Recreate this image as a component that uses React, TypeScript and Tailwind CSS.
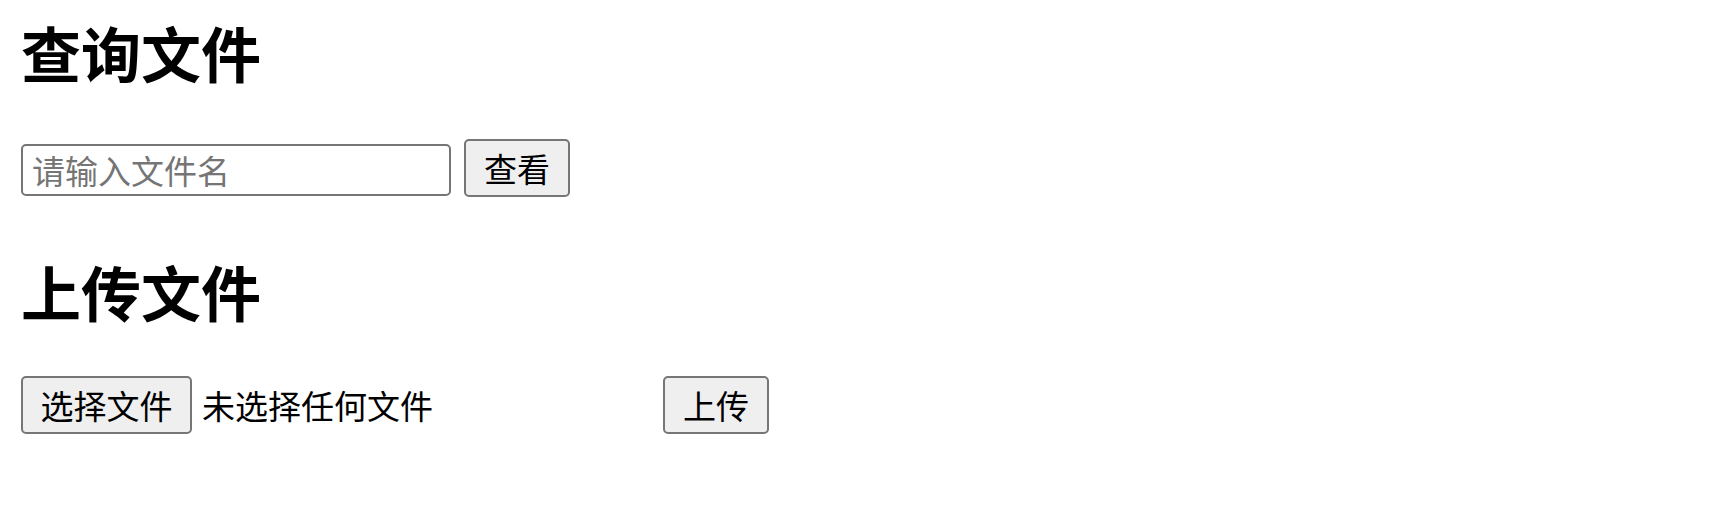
import React, { useState } from 'react';

const App: React.FC = () => {
  const [fileName, setFileName] = useState('');
  const [query, setQuery] = useState('');

  const font = { fontFamily: '"Microsoft YaHei", "Noto Sans CJK SC", "Noto Sans", sans-serif' };
  const btn =
    'h-[58px] border-2 border-[#767676] rounded-[5px] bg-[#efefef] text-[33px] leading-none text-black flex items-center justify-center cursor-pointer';

  return (
    <div className="min-h-screen bg-white pl-[21px] pt-[22px] text-black" style={font}>
      <h2 className="text-[60px] font-bold leading-[60px]">查询文件</h2>

      <div className="mt-[57px] flex items-start gap-[13px]">
        <input
          type="text"
          value={query}
          onChange={e => setQuery(e.target.value)}
          placeholder="请输入文件名"
          className="mt-[5px] h-[52px] w-[430px] border-2 border-[#767676] rounded-[5px] px-[9px] text-[33px] leading-none outline-none placeholder:text-[#757575]"
        />
        <button className={`${btn} w-[106px]`}>查看</button>
      </div>

      <h2 className="mt-[64px] text-[60px] font-bold leading-[60px]">上传文件</h2>

      <div className="mt-[55px] flex items-center">
        <label className={`${btn} w-[171px]`}>
          选择文件
          <input
            type="file"
            className="hidden"
            onChange={e => setFileName(e.target.files?.[0]?.name ?? '')}
          />
        </label>
        <span className="ml-[10px] w-[461px] text-[33px] leading-none">{fileName || '未选择任何文件'}</span>
        <button className={`${btn} w-[106px]`}>上传</button>
      </div>
    </div>
  );
};

export default App;
